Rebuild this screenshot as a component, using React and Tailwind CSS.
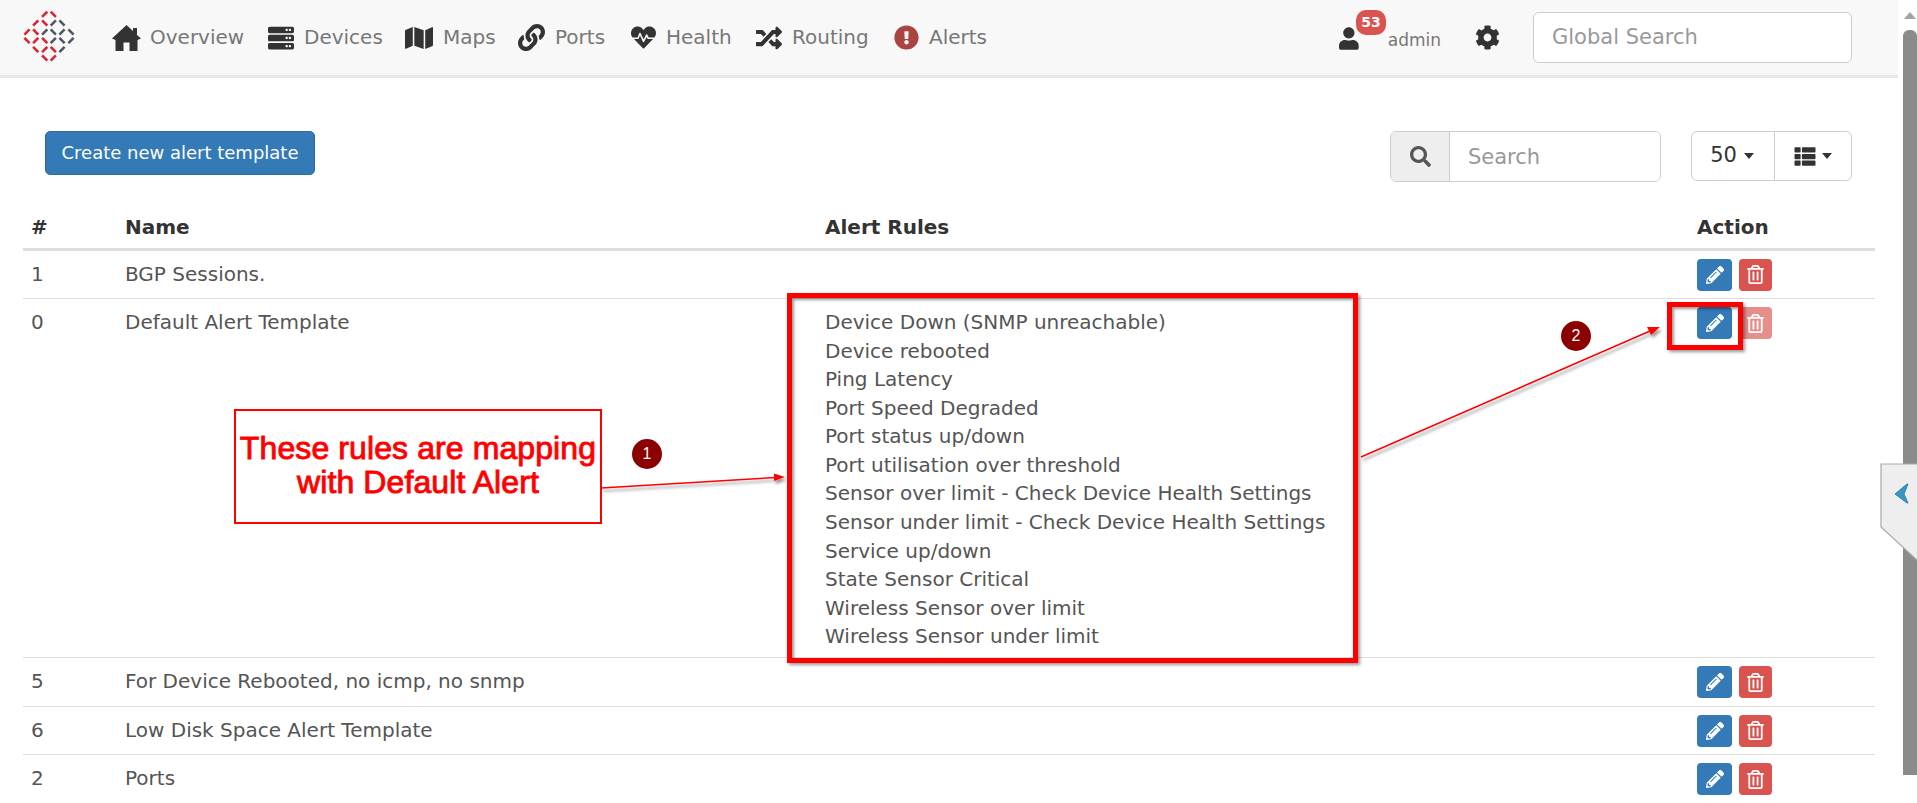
import {
  FaServer,
  FaMap,
  FaLink,
  FaHeartbeat,
  FaRandom,
  FaExclamationCircle,
  FaUser,
  FaCog,
  FaSearch,
  FaThList,
  FaPencilAlt,
  FaRegTrashAlt,
} from "react-icons/fa";

function HomeIcon({ className }) {
  return (
    <svg viewBox="0 0 29 26" className={className} fill="currentColor">
      <path d="M14.5 0 L21 6 V3 H25 V10 L29 13.5 L25.5 15 V26 H17.5 V17.5 H11.5 V26 H3.5 V15 L0 13.5 Z" />
    </svg>
  );
}

const navItems = [
  { label: "Overview", Icon: HomeIcon, icon: "w-[29px] h-[26px] text-[#333]", box: "w-[38px]", text: "w-[118px]" },
  { label: "Devices", Icon: FaServer, icon: "w-[26px] h-[26px] text-[#333]", box: "w-[36px]", text: "w-[101px]" },
  { label: "Maps", Icon: FaMap, icon: "w-[28px] h-[26px] text-[#333]", box: "w-[38px]", text: "w-[74px]" },
  { label: "Ports", Icon: FaLink, icon: "w-[29px] h-[27px] text-[#333]", box: "w-[38px]", text: "w-[75px]" },
  { label: "Health", Icon: FaHeartbeat, icon: "w-[27px] h-[25px] text-[#333]", box: "w-[36px]", text: "w-[90px]" },
  { label: "Routing", Icon: FaRandom, icon: "w-[26px] h-[26px] text-[#333]", box: "w-[36px]", text: "w-[102px]" },
  { label: "Alerts", Icon: FaExclamationCircle, icon: "w-[25px] h-[25px] text-[#a94442]", box: "w-[35px]", text: "" },
];

const rules = [
  "Device Down (SNMP unreachable)",
  "Device rebooted",
  "Ping Latency",
  "Port Speed Degraded",
  "Port status up/down",
  "Port utilisation over threshold",
  "Sensor over limit - Check Device Health Settings",
  "Sensor under limit - Check Device Health Settings",
  "Service up/down",
  "State Sensor Critical",
  "Wireless Sensor over limit",
  "Wireless Sensor under limit",
];

const rows = [
  { id: 1, name: "BGP Sessions." },
  { id: 0, name: "Default Alert Template", rules, locked: true },
  { id: 5, name: "For Device Rebooted, no icmp, no snmp" },
  { id: 6, name: "Low Disk Space Alert Template" },
  { id: 2, name: "Ports" },
];

// lattice of the logo: [x, y, direction, red?]
const logoDashes = [
  [44.7, 14.3, 1, 1], [53.3, 14.3, -1, 1],
  [35.7, 23, 1, 1], [44.7, 23, -1, 1], [53.3, 23, 1, 0], [62, 23, -1, 0],
  [27, 32, 1, 1], [35.7, 32, -1, 1], [44.7, 32, 1, 0], [53.3, 32, -1, 0], [62, 32, 1, 0], [71, 32, -1, 0],
  [27, 40.5, -1, 1], [35.7, 40.5, 1, 1], [44.7, 40.5, -1, 1], [53.3, 40.5, 1, 0], [62, 40.5, -1, 0], [71, 40.5, 1, 0],
  [35.7, 49.5, -1, 1], [44.7, 49.5, 1, 1], [53.3, 49.5, -1, 1], [62, 49.5, 1, 0],
  [44.7, 58, -1, 1], [53.3, 58, 1, 1],
];

function Logo() {
  return (
    <svg viewBox="0 0 112 75" className="w-[112px] h-[75px] shrink-0">
      {logoDashes.map(([x, y, d, red], i) => (
        <line
          key={i}
          x1={x - 2.6}
          y1={y + 2.6 * d}
          x2={x + 2.6}
          y2={y - 2.6 * d}
          stroke={red ? "#d9232e" : "#4d5666"}
          strokeWidth="2.6"
        />
      ))}
    </svg>
  );
}

function NavItem({ item }) {
  const { label, Icon, icon, box, text } = item;
  return (
    <div className="flex items-center shrink-0">
      <div className={`${box} shrink-0`}>
        <Icon className={icon} />
      </div>
      <span className={`${text} shrink-0 text-[20px] text-[#777] mb-[2px]`}>{label}</span>
    </div>
  );
}

function Navbar() {
  return (
    <div className="flex items-center h-[78px] bg-[#f8f8f8] border-b-[3px] border-[#e7e7e7] pr-[46px]">
      <Logo />
      {navItems.map((item) => (
        <NavItem key={item.label} item={item} />
      ))}
      <div className="flex-1" />
      <div className="relative flex items-center w-[102px] h-[50px]">
        <FaUser className="w-[22px] h-[25px] text-[#333] mt-[1px]" />
        <span className="absolute left-[17px] top-[-3px] w-[30px] h-[25px] rounded-[10px] bg-[#d9534f] text-white text-[14px] font-bold flex items-center justify-center">
          53
        </span>
        <span className="ml-[29px] mt-[6px] text-[17px] text-[#777]">admin</span>
      </div>
      <FaCog className="w-[25px] h-[25px] text-[#333] ml-[34px] mr-[33px]" />
      <input
        placeholder="Global Search"
        className="w-[319px] h-[51px] rounded-[6px] border border-[#ccc] bg-white px-[18px] pb-[2px] text-[21px] outline-none placeholder:text-[#999]"
      />
    </div>
  );
}

function Toolbar() {
  return (
    <div className="flex items-start pt-[53px] pl-[45px] pr-[46px]">
      <button className="w-[270px] h-[44px] pb-[2px] rounded-[5px] bg-[#337ab7] border border-[#2e6da4] text-white text-[18px]">
        Create new alert template
      </button>
      <div className="flex-1" />
      <div className="flex w-[271px] h-[51px] rounded-[6px] border border-[#ccc] overflow-hidden">
        <div className="w-[59px] bg-[#eee] border-r border-[#ccc] flex items-center justify-center">
          <FaSearch className="w-[21px] h-[21px] text-[#555]" />
        </div>
        <input
          placeholder="Search"
          className="flex-1 min-w-0 bg-white px-[18px] pt-[2px] text-[21px] outline-none placeholder:text-[#999]"
        />
      </div>
      <div className="flex w-[161px] h-[50px] ml-[30px] rounded-[6px] border border-[#ccc] text-[#333]">
        <div className="w-[83px] border-r border-[#ccc] flex items-center justify-center gap-[7px] text-[21px] pr-[2px]">
          50
          <span className="border-x-[5px] border-t-[6px] border-x-transparent border-t-[#333]" />
        </div>
        <div className="flex-1 flex items-center justify-center gap-[6px]">
          <FaThList className="w-[22px] h-[21px]" />
          <span className="border-x-[5px] border-t-[6px] border-x-transparent border-t-[#333]" />
        </div>
      </div>
    </div>
  );
}

function Row({ row }) {
  return (
    <div className="grid grid-cols-[94px_700px_872px_186px] border-b border-[#ddd] text-[20px] leading-[28.57px] text-[#555]">
      <div className="px-2 pt-[9px] pb-[6.5px]">{row.id}</div>
      <div className="px-2 pt-[9px] pb-[6.5px]">{row.name}</div>
      <div className="px-2 pt-[9px] pb-[6.5px]">
        {row.rules && row.rules.map((r) => <div key={r}>{r}</div>)}
      </div>
      <div className="px-2 pt-2 pb-[7.5px] flex items-start gap-[7px]">
        <button className="w-[35px] h-[32px] rounded-[4px] bg-[#337ab7] flex items-center justify-center">
          <FaPencilAlt className="w-[18px] h-[18px] text-white" />
        </button>
        <button className={`w-[33px] h-[32px] rounded-[4px] bg-[#d9534f] flex items-center justify-center ${row.locked ? "opacity-65" : ""}`}>
          <FaRegTrashAlt className="w-[17px] h-[19px] text-white" />
        </button>
      </div>
    </div>
  );
}

function Table() {
  return (
    <div className="mx-[23px] mt-[23px]">
      <div className="grid grid-cols-[94px_700px_872px_186px] border-b-[3px] border-[#ddd] text-[20px] leading-[28.57px] font-bold text-[#333]">
        <div className="px-2 pt-2 pb-[6px]">#</div>
        <div className="px-2 pt-2 pb-[6px]">Name</div>
        <div className="px-2 pt-2 pb-[6px]">Alert Rules</div>
        <div className="px-2 pt-2 pb-[6px]">Action</div>
      </div>
      {rows.map((row) => (
        <Row key={row.id} row={row} />
      ))}
    </div>
  );
}

function Scrollbar() {
  return (
    <div className="w-[19px] shrink-0 bg-white flex flex-col items-end">
      <div className="w-[15px] h-[30px] flex items-center justify-center">
        <span className="border-x-[6px] border-b-[7px] border-x-transparent border-b-[#a3a3a3]" />
      </div>
      <div className="w-[14px] h-[745px] bg-[#8b8b8b] rounded-t-[6px]" />
    </div>
  );
}

// the red markup drawn on top of the screenshot
function Annotations() {
  return (
    <>
      <svg className="absolute left-0 top-0 w-[1917px] h-[803px] pointer-events-none" viewBox="0 0 1917 803">
        <defs>
          <filter id="shadow" x="-10%" y="-10%" width="120%" height="130%">
            <feDropShadow dx="2" dy="3" stdDeviation="1.5" floodColor="#000" floodOpacity="0.4" />
          </filter>
        </defs>
        <g filter="url(#shadow)">
          <line x1="601" y1="488" x2="776" y2="477.5" stroke="#f00" strokeWidth="1.5" />
          <polygon points="785,477 774,473.5 774,481" fill="#f00" />
          <line x1="1361" y1="457" x2="1650" y2="331" stroke="#f00" strokeWidth="1.5" />
          <polygon points="1660,327 1647,327 1651,335" fill="#f00" />
        </g>
      </svg>
      <div className="absolute left-[787px] top-[293px] w-[571px] h-[370px] border-[5px] border-[#f00] shadow-[2px_2px_3px_rgba(0,0,0,0.4),inset_2px_2px_3px_rgba(0,0,0,0.4)]" />
      <div className="absolute left-[1667px] top-[302px] w-[76px] h-[48px] border-[5px] border-[#f00] shadow-[2px_2px_3px_rgba(0,0,0,0.4),inset_2px_2px_3px_rgba(0,0,0,0.4)]" />
      <div className="absolute left-[234px] top-[409px] w-[368px] h-[115px] border-2 border-[#f00] bg-white flex items-center justify-center text-center text-[#f00] text-[32px] leading-[34px] tracking-[0.1px] [-webkit-text-stroke:0.9px_#f00] font-['Liberation_Sans',sans-serif] pb-[4px]">
        <div>
          These rules are mapping
          <br />
          with Default Alert
        </div>
      </div>
      <div className="absolute left-[632px] top-[439px] w-[30px] h-[30px] rounded-full bg-[#8b0000] text-white text-[16px] flex items-center justify-center font-['Liberation_Sans',sans-serif]">
        1
      </div>
      <div className="absolute left-[1561px] top-[321px] w-[30px] h-[30px] rounded-full bg-[#8b0000] text-white text-[16px] flex items-center justify-center font-['Liberation_Sans',sans-serif]">
        2
      </div>
      <svg className="absolute left-[1880px] top-[463px] w-[37px] h-[98px]" viewBox="0 0 37 98">
        <polygon points="1,1 37,1 37,97 1,64" fill="#eee" />
        <polyline points="37,1 1,1 1,64 37,97" fill="none" stroke="#aaa" strokeWidth="1.2" />
        <polygon points="27,21 15,31 27,40 28,40 24,31 28,21" fill="#3b94c4" stroke="#2f86b8" strokeWidth="1" />
      </svg>
    </>
  );
}

export default function App() {
  return (
    <div className="relative flex w-[1917px] h-[803px] overflow-hidden bg-white font-['DejaVu_Sans',sans-serif]">
      <div className="w-[1898px] shrink-0">
        <Navbar />
        <Toolbar />
        <Table />
      </div>
      <Scrollbar />
      <Annotations />
    </div>
  );
}
